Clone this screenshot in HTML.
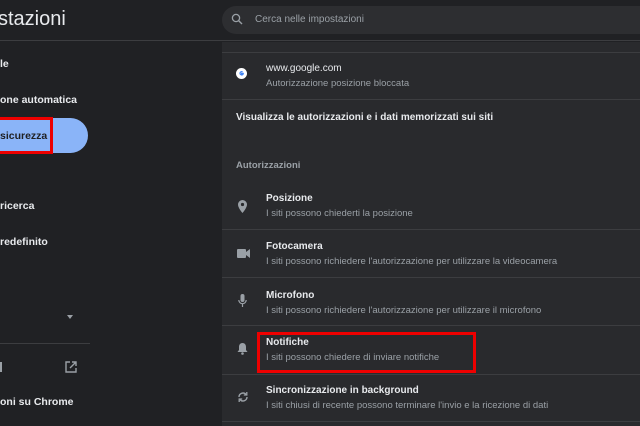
<!DOCTYPE html>
<html><head><style>
*{margin:0;padding:0;box-sizing:border-box}
body{width:640px;height:426px;overflow:hidden;background:#202124;font-family:"Liberation Sans",sans-serif;position:relative;color:#e8eaed}
.a{position:absolute;white-space:nowrap}
.hdr{position:absolute;left:0;top:0;width:640px;height:41px;background:#202124;border-bottom:1px solid #3c3d40}
.card{position:absolute;left:222px;top:42px;width:418px;height:384px;background:#292a2d}
.dv{position:absolute;left:222px;width:418px;height:1px;background:#3c3d40}
.t{font-size:10px;font-weight:bold;color:#e8eaed}
.s{font-size:9.5px;color:#9aa0a6}
.side{font-size:10.5px;font-weight:bold;color:#e8eaed}
</style></head><body>
<div class="hdr"></div>
<div class="a" style="left:-2px;top:8px;font-size:20px;color:#e8eaed">stazioni</div>
<div class="a" style="left:222px;top:6px;width:418px;height:28px;border-radius:14px 0 0 14px;background:#2d2e31"></div>
<svg class="a" style="left:231px;top:13px" width="12" height="12" viewBox="0 0 12 12"><circle cx="5" cy="5" r="3.6" fill="none" stroke="#9aa0a6" stroke-width="1.3"/><path d="M7.7 7.7L11 11" stroke="#9aa0a6" stroke-width="1.4"/></svg>
<div class="a" style="left:255px;top:14px;font-size:10px;color:#9aa0a6">Cerca nelle impostazioni</div>

<div class="a side" style="left:0;top:58px">le</div>
<div class="a side" style="left:0;top:94px">one automatica</div>
<div class="a" style="left:-20px;top:118px;width:108px;height:35px;border-radius:18px;background:#8ab4f8"></div>
<div class="a" style="left:-3px;top:117px;width:56px;height:37px;border:3px solid #e00"></div>
<div class="a side" style="left:0;top:130px;color:#202124">sicurezza</div>
<div class="a side" style="left:0;top:200px">ricerca</div>
<div class="a side" style="left:0;top:236px">redefinito</div>
<div class="a" style="left:67px;top:315px;width:0;height:0;border-left:3px solid transparent;border-right:3px solid transparent;border-top:4px solid #9aa0a6"></div>
<div class="a" style="left:0;top:343px;width:90px;height:1px;background:#3c3d40"></div>
<div class="a" style="left:0;top:362px;width:2px;height:10px;background:#9aa0a6"></div>
<svg class="a" style="left:65px;top:361px" width="12" height="12" viewBox="0 0 12 12"><path d="M5 1H1v10h10V7" fill="none" stroke="#9aa0a6" stroke-width="1.4"/><path d="M7 1h4v4M11 1L5 7" fill="none" stroke="#9aa0a6" stroke-width="1.4"/></svg>
<div class="a side" style="left:0;top:396px">oni su Chrome</div>

<div class="card"></div>
<div class="dv" style="top:52px"></div>
<svg class="a" style="left:236px;top:68px" width="11" height="11" viewBox="0 0 11 11"><circle cx="5.5" cy="5.5" r="5.5" fill="#fff"/><path d="M7.8 5.3H5.6v1.1h1.2A1.6 1.6 0 1 1 6.6 4" fill="none" stroke="#4285f4" stroke-width="1.2"/></svg>
<div class="a t" style="left:266px;top:63px;font-weight:normal">www.google.com</div>
<div class="a s" style="left:266px;top:78px">Autorizzazione posizione bloccata</div>
<div class="dv" style="top:99px"></div>
<div class="a t" style="left:236px;top:112px">Visualizza le autorizzazioni e i dati memorizzati sui siti</div>
<div class="a s" style="left:236px;top:160px;font-weight:bold">Autorizzazioni</div>

<svg class="a" style="left:238px;top:200px" width="9" height="13" viewBox="0 0 9 13"><path d="M4.5 0A4.5 4.5 0 0 0 0 4.5C0 8 4.5 13 4.5 13S9 8 9 4.5A4.5 4.5 0 0 0 4.5 0z" fill="#9aa0a6"/><circle cx="4.5" cy="4.5" r="1.6" fill="#292a2d"/></svg>
<div class="a t" style="left:266px;top:193px">Posizione</div>
<div class="a s" style="left:266px;top:208px">I siti possono chiederti la posizione</div>
<div class="dv" style="top:229px"></div>
<svg class="a" style="left:237px;top:249px" width="13" height="9" viewBox="0 0 13 9"><rect x="0" y="0" width="9" height="9" rx="1" fill="#9aa0a6"/><path d="M9 3l4-3v9L9 6z" fill="#9aa0a6"/></svg>
<div class="a t" style="left:266px;top:241px">Fotocamera</div>
<div class="a s" style="left:266px;top:256px">I siti possono richiedere l'autorizzazione per utilizzare la videocamera</div>
<div class="dv" style="top:277px"></div>
<svg class="a" style="left:238px;top:294px" width="9" height="13" viewBox="0 0 9 13"><rect x="2.5" y="0" width="4" height="8" rx="2" fill="#9aa0a6"/><path d="M0.8 6a3.7 3.7 0 0 0 7.4 0M4.5 10v3" fill="none" stroke="#9aa0a6" stroke-width="1.2"/></svg>
<div class="a t" style="left:266px;top:290px">Microfono</div>
<div class="a s" style="left:266px;top:305px">I siti possono richiedere l'autorizzazione per utilizzare il microfono</div>
<div class="dv" style="top:325px"></div>
<svg class="a" style="left:237px;top:342px" width="11" height="13" viewBox="0 0 11 13"><path d="M5.5 1C3 1 2 3 2 5v3L0.5 10h10L9 8V5C9 3 8 1 5.5 1z" fill="#9aa0a6"/><circle cx="5.5" cy="11.5" r="1.3" fill="#9aa0a6"/></svg>
<div class="a" style="left:257px;top:332px;width:219px;height:41px;border:3px solid #e00"></div>
<div class="a t" style="left:266px;top:337px">Notifiche</div>
<div class="a s" style="left:266px;top:352px">I siti possono chiedere di inviare notifiche</div>
<div class="dv" style="top:374px"></div>
<svg class="a" style="left:237px;top:391px" width="12" height="12" viewBox="0 0 12 12"><path d="M2 6a4 4 0 0 1 7-2.6M10 6a4 4 0 0 1-7 2.6" fill="none" stroke="#9aa0a6" stroke-width="1.4"/><path d="M9.8 1v3H6.8M2.2 11V8h3" fill="none" stroke="#9aa0a6" stroke-width="1.3"/></svg>
<div class="a t" style="left:266px;top:385px">Sincronizzazione in background</div>
<div class="a s" style="left:266px;top:400px">I siti chiusi di recente possono terminare l'invio e la ricezione di dati</div>
<div class="dv" style="top:421px"></div>
</body></html>
